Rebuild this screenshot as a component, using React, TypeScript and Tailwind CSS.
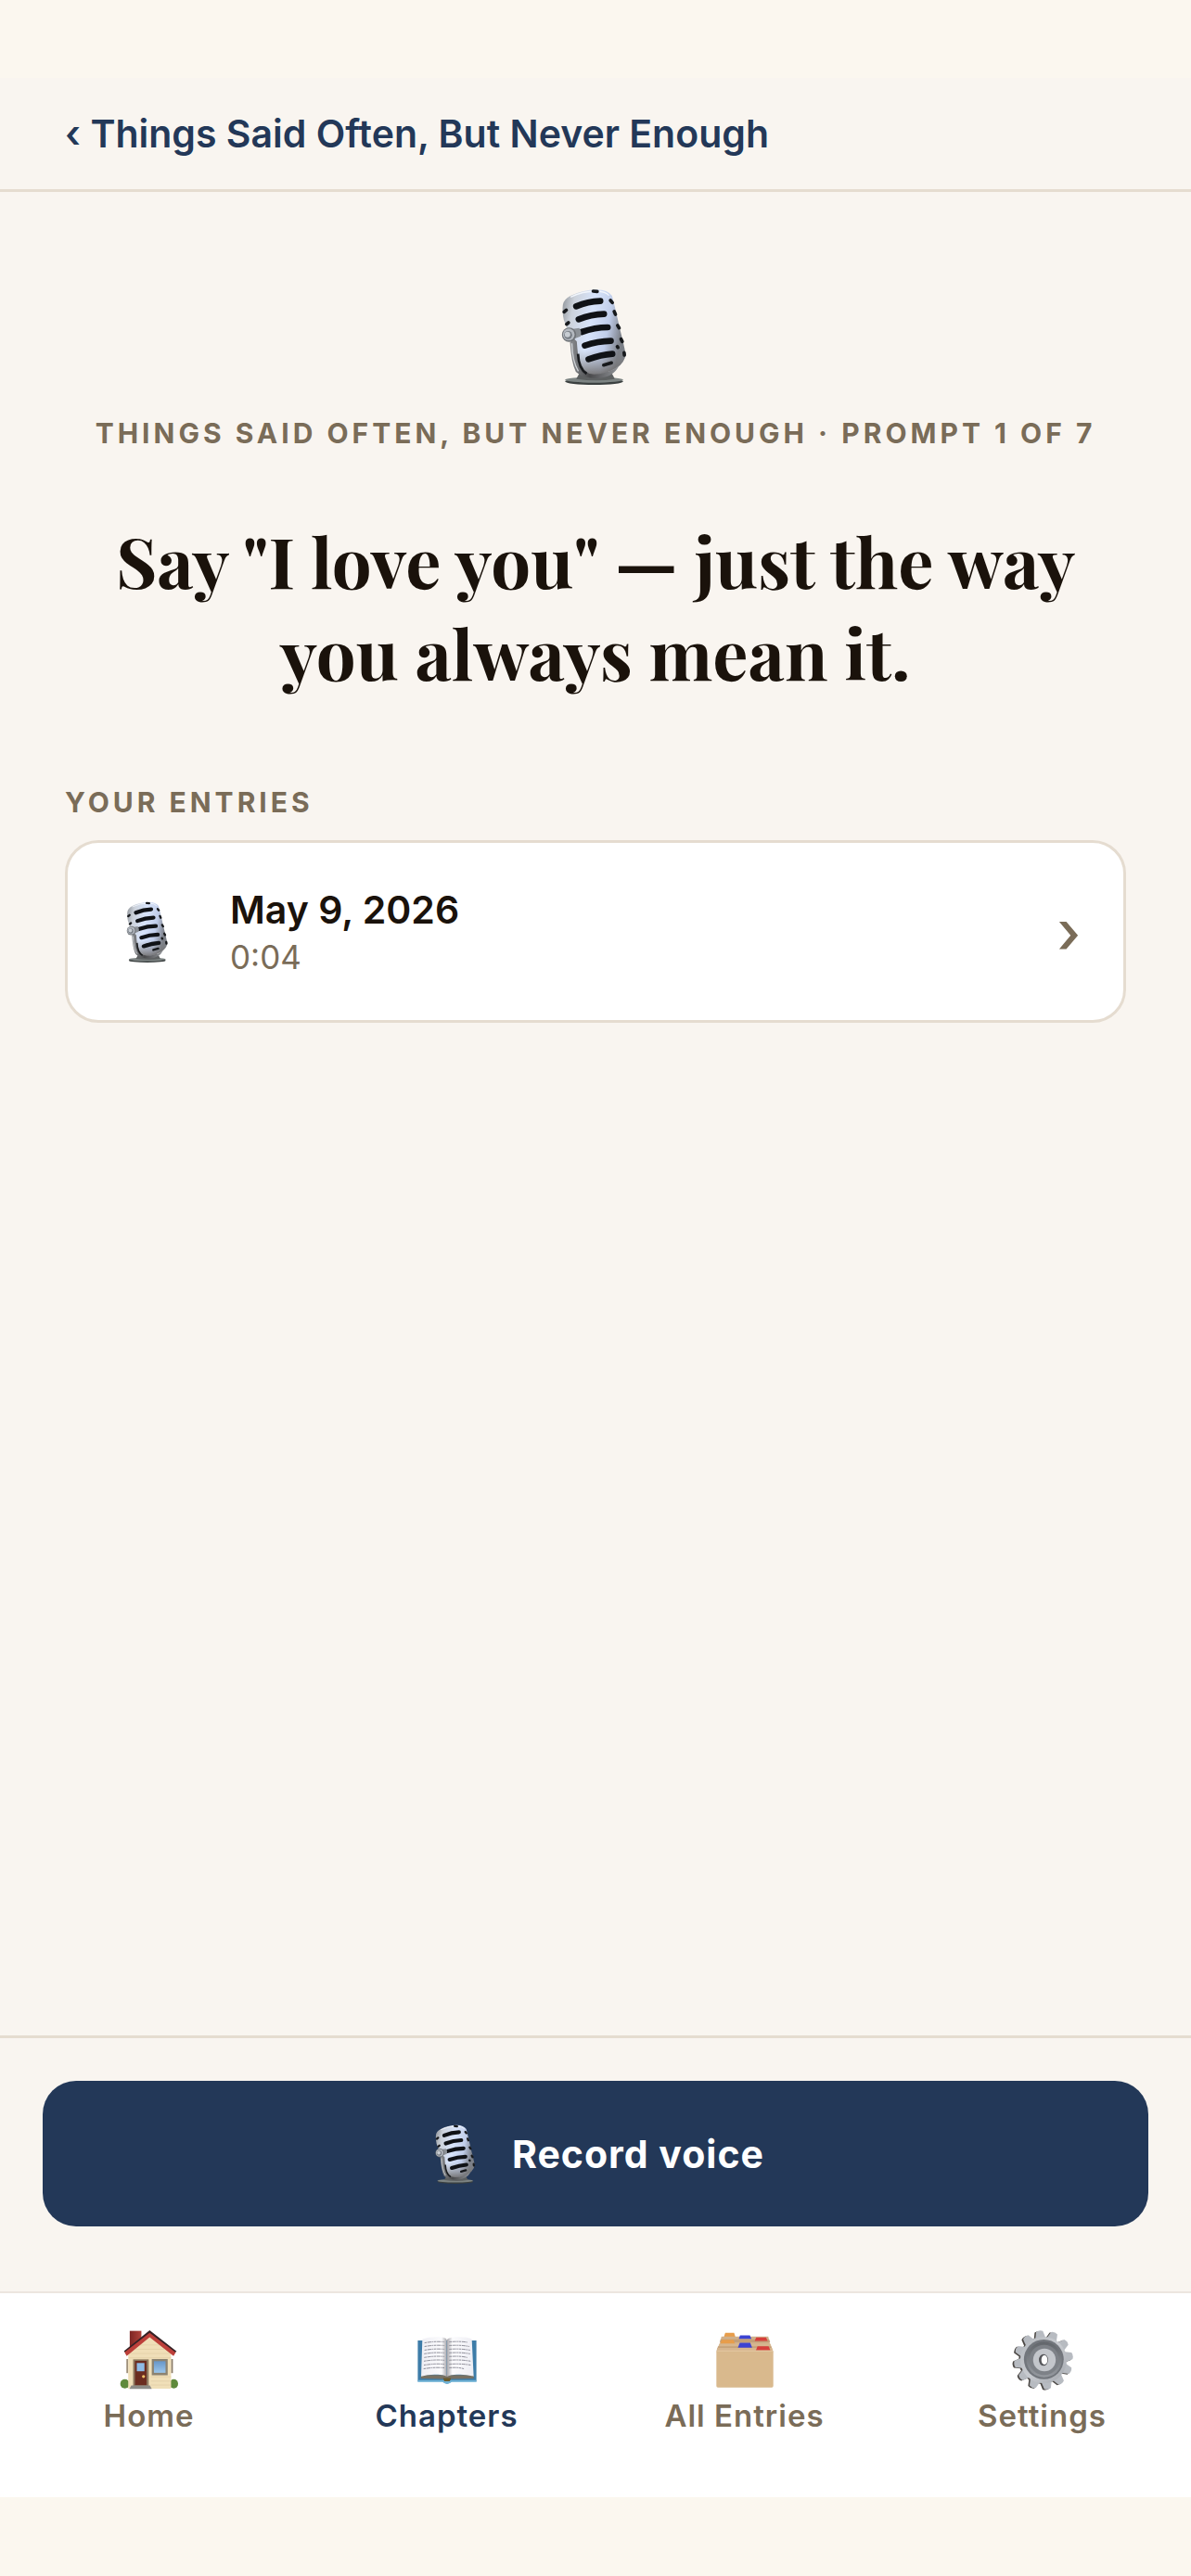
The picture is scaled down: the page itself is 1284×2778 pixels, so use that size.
import type { ReactNode } from 'react';

type IconProps = {
  className?: string;
};

type Entry = {
  id: number;
  date: string;
  duration: string;
};

type Tab = {
  label: string;
  href: string;
  icon: ReactNode;
  active?: boolean;
};

const CHAPTER = 'Things Said Often, But Never Enough';

const entries: Entry[] = [{ id: 1, date: 'May 9, 2026', duration: '0:04' }];

function MicIcon({ className }: IconProps) {
  return (
    <svg viewBox="50 30 212 312" overflow="visible" className={className} aria-hidden="true">
      <defs>
        <linearGradient id="micBody" x1="0" y1="0" x2="1" y2="0.25">
          <stop offset="0" stopColor="#8b8f94" />
          <stop offset="0.2" stopColor="#ccd2db" />
          <stop offset="0.5" stopColor="#d8e4fb" />
          <stop offset="0.78" stopColor="#c0cdea" />
          <stop offset="1" stopColor="#7c8088" />
        </linearGradient>
        <linearGradient id="micShade" x1="0" y1="0" x2="0" y2="1">
          <stop offset="0.7" stopColor="#888" stopOpacity="0" />
          <stop offset="1" stopColor="#66625e" stopOpacity="0.85" />
        </linearGradient>
        <linearGradient id="micArm" x1="0" y1="0" x2="1" y2="0">
          <stop offset="0" stopColor="#8b8e92" />
          <stop offset="0.4" stopColor="#4a4a4c" />
          <stop offset="1" stopColor="#919499" />
        </linearGradient>
      </defs>
      {/* stand */}
      <ellipse cx="150" cy="331" rx="94" ry="11" fill="#3b4040" />
      <ellipse cx="150" cy="326" rx="94" ry="9" fill="#7d8483" />
      <path d="M105 300 L205 300 L217 323 Q160 332 92 323Z" fill="#5d6061" />
      {/* capsule */}
      <path
        d="M49 83 Q52 66 72 55 Q110 35 160 34 Q194 35 208 54 Q220 100 233 160 Q247 215 252 242 Q250 270 221 288 Q185 310 132 312 Q98 302 92 270 Q73 180 52 132 Q46 104 49 83Z"
        fill="url(#micBody)"
      />
      <path
        d="M49 83 Q52 66 72 55 Q110 35 160 34 Q194 35 208 54 Q220 100 233 160 Q247 215 252 242 Q250 270 221 288 Q185 310 132 312 Q98 302 92 270 Q73 180 52 132 Q46 104 49 83Z"
        fill="url(#micShade)"
      />
      <path d="M74 58 Q115 38 160 39 Q187 40 198 53" fill="none" stroke="#f2f6fc" strokeWidth="4" />
      {/* grille slots */}
      <g fill="none" stroke="#101216" strokeWidth="20" strokeLinecap="round">
        <path d="M92 88 Q130 72 170 71" />
        <path d="M100 130 Q140 114 182 113" />
        <path d="M110 171 Q152 156 194 156" />
        <path d="M120 215 Q162 201 204 200" />
        <path d="M132 259 Q172 245 209 242" />
      </g>
      <g fill="none" stroke="#17191c" strokeWidth="11" strokeLinecap="round">
        <path d="M147 39 L160 40" />
        <path d="M53 106 L60 100" />
        <path d="M61 146 L67 141" />
        <path d="M203 69 L209 76" />
        <path d="M215 105 L219 114" />
        <path d="M226 150 L231 158" />
        <path d="M237 194 L241 202" />
        <path d="M225 218 L227 221" />
        <path d="M247 238 L248 246" />
        <path d="M181 278 L206 271" />
      </g>
      {/* yoke */}
      <path
        d="M84 192 L94 202 Q97 248 103 274 Q112 306 150 308 Q196 308 231 280 Q212 319 160 321 Q112 321 91 300 Q76 270 72 204Z"
        fill="url(#micArm)"
      />
      <path d="M98 242 Q100 290 126 306" fill="none" stroke="#191b1e" strokeWidth="8" />
      <path d="M78 208 Q80 268 99 298" fill="none" stroke="#d0d3d7" strokeWidth="4" />
      <path d="M75 162 L102 158 Q111 170 106 185 L78 196Z" fill="#8b9096" />
      <circle cx="69" cy="180" r="23" fill="#6f7378" />
      <circle cx="68" cy="179" r="19" fill="#b4b9c0" />
      <circle cx="66" cy="181" r="13" fill="#767c83" />
      <circle cx="64" cy="179" r="9" fill="#c8cdd3" />
    </svg>
  );
}

function HomeIcon({ className }: IconProps) {
  return (
    <svg viewBox="84 70 190 194" className={className} aria-hidden="true">
      <defs>
        <linearGradient id="homeChimney" x1="0" y1="0" x2="1" y2="0">
          <stop offset="0" stopColor="#7c2523" />
          <stop offset="1" stopColor="#b0423a" />
        </linearGradient>
        <linearGradient id="homeGlass" x1="0" y1="0" x2="0" y2="1">
          <stop offset="0" stopColor="#6796c8" />
          <stop offset="1" stopColor="#9cc6ea" />
        </linearGradient>
      </defs>
      <rect x="104" y="164" width="6" height="46" fill="#9d8f79" />
      <rect x="250" y="164" width="6" height="46" fill="#8a7c68" />
      <ellipse cx="99" cy="245" rx="15" ry="15" fill="#5f8a3c" />
      <ellipse cx="259" cy="245" rx="14" ry="15" fill="#5f8a3c" />
      <rect x="115" y="72" width="38" height="60" fill="url(#homeChimney)" />
      <path d="M110 145 L180 84 L250 145 L250 261 L110 261Z" fill="#f0dfb8" />
      <g stroke="#d9c69c" strokeWidth="1.5">
        <path d="M148 118H212M134 132H228M118 146H244M112 160H250M184 222H250M184 236H250M184 249H250" />
      </g>
      {/* roof */}
      <path d="M96 138 L180 70 L268 139 L260 146 L180 84 L104 147Z" fill="#352225" />
      <path d="M98 142 L180 78 L265 143 L258 154 L180 93 L105 154Z" fill="#bd403a" />
      {/* door */}
      <rect x="126" y="165" width="51" height="88" fill="#8e7a60" />
      <rect x="132" y="170" width="38" height="80" fill="#6b2d20" />
      <rect x="138" y="177" width="25" height="27" fill="#8fbbe6" />
      <circle cx="160" cy="221" r="5" fill="#f2c368" />
      {/* window */}
      <rect x="187" y="164" width="52" height="53" fill="#8c8370" />
      <rect x="194" y="171" width="38" height="38" fill="url(#homeGlass)" />
      <path d="M120 250H181L187 262H114Z" fill="#8d8b86" />
    </svg>
  );
}

function BookIcon({ className }: IconProps) {
  return (
    <svg viewBox="178 88 194 158" className={className} aria-hidden="true">
      <defs>
        <linearGradient id="bookLeft" x1="0" y1="0" x2="1" y2="0">
          <stop offset="0" stopColor="#eeeef4" />
          <stop offset="0.8" stopColor="#fbfbfd" />
          <stop offset="1" stopColor="#a9a8ad" />
        </linearGradient>
        <linearGradient id="bookRight" x1="0" y1="0" x2="1" y2="0">
          <stop offset="0" stopColor="#a9a8ad" />
          <stop offset="0.2" stopColor="#fbfbfd" />
          <stop offset="1" stopColor="#eeeef4" />
        </linearGradient>
      </defs>
      <path d="M179 103H371V238H290Q275 252 260 238H179Z" fill="#3d7ca8" />
      <path d="M179 233H371V239H290Q275 252 260 239H179Z" fill="#6fb2d6" />
      <path d="M190 216 L362 216 L362 228 L288 229 Q275 240 262 229 L189 228Z" fill="#777164" />
      <path d="M262 226H288L284 237H266Z" fill="#6b5b2c" />
      <path d="M194 99 Q218 91 245 92 Q268 91 274 100 V222 Q262 214 240 215 Q213 214 190 221Z" fill="url(#bookLeft)" />
      <path d="M275 100 Q284 91 310 92 Q340 91 356 99 L362 221 Q336 214 312 215 Q288 214 275 222Z" fill="url(#bookRight)" />
      <g fill="none" stroke="#777884" strokeWidth="2.5" strokeDasharray="8 2 12 2 5 2">
        <path d="M201 111 Q235 105 266 108M201 123 Q235 117 266 120M201 135 Q235 129 266 132M200 147 Q235 141 266 144M200 159 Q235 153 266 156M199 171 Q235 165 266 168M199 184 Q235 178 266 181M198 196 Q235 190 266 193" />
        <path d="M282 108 Q315 105 341 109M282 120 Q318 117 348 123M282 132 Q318 129 350 135M282 144 Q318 141 350 147M282 156 Q318 153 341 159M282 168 Q318 165 352 171M282 181 Q318 178 354 184M282 193 Q310 190 330 196" />
      </g>
    </svg>
  );
}

function DividersIcon({ className }: IconProps) {
  return (
    <svg viewBox="214 80 184 176" className={className} aria-hidden="true">
      <path d="M240 95 L244 82 H272 L276 95Z" fill="#e79d4b" />
      <path d="M232 94 H380 L390 138 H222Z" fill="#d0b08a" />
      <path d="M229 103 H383 L386 112 H227Z" fill="#c29f79" />
      <path d="M287 101 L291 90 H322 L327 101Z" fill="#3b43d2" />
      <path d="M337 108 L342 97 H373 L378 108Z" fill="#d63f3b" />
      <path d="M228 117 L233 104 H270 L275 117Z" fill="#e79d4b" />
      <path d="M225 117 H387 L391 130 H221Z" fill="#d6b68f" />
      <path d="M221 125 H389 L394 138 H217Z" fill="#c5a27a" />
      <path d="M284 129 L290 114 H323 L329 129Z" fill="#3b43d2" />
      <path d="M219 130 H392 L396 142 H216Z" fill="#d6b68f" />
      <path d="M341 138 L346 125 H381 L387 138Z" fill="#d63f3b" />
      <rect x="216" y="138" width="180" height="117" rx="5" fill="#d9b98d" />
      <rect x="219" y="138" width="175" height="3" fill="#e3c8a3" />
    </svg>
  );
}

const toothAngles = [0, 30, 60, 90, 120, 150, 180, 210, 240, 270, 300, 330];

function GearIcon({ className }: IconProps) {
  const teeth = toothAngles.map((angle) => (
    <path
      key={angle}
      d="M234 100 L241 72 Q252 66 263 72 L270 100Z"
      transform={`rotate(${angle - 8} 252 166)`}
    />
  ));

  return (
    <svg viewBox="150 66 198 200" className={className} aria-hidden="true">
      <defs>
        <linearGradient id="gearFace" x1="0" y1="0" x2="1" y2="1">
          <stop offset="0" stopColor="#b5b9be" />
          <stop offset="0.5" stopColor="#c8cbd0" />
          <stop offset="1" stopColor="#a2a6ac" />
        </linearGradient>
        <linearGradient id="gearRing" x1="0" y1="0" x2="0" y2="1">
          <stop offset="0" stopColor="#62666b" />
          <stop offset="1" stopColor="#95999f" />
        </linearGradient>
      </defs>
      <g fill="#4c4845" transform="translate(-5 2)">
        {teeth}
        <circle cx="252" cy="166" r="76" />
      </g>
      <g fill="#b7bbc1">{teeth}</g>
      <circle cx="252" cy="166" r="76" fill="url(#gearFace)" />
      <circle cx="253" cy="164" r="65" fill="#72767c" />
      <circle cx="254" cy="165" r="58" fill="url(#gearRing)" />
      <circle cx="254" cy="166" r="49" fill="#7d8187" />
      <circle cx="255" cy="166" r="37" fill="#c3c6cb" />
      <ellipse cx="252" cy="166" rx="15" ry="19" fill="#55565a" />
      <ellipse cx="255" cy="166" rx="10" ry="15" fill="#ffffff" />
    </svg>
  );
}

const tabs: Tab[] = [
  { label: 'Home', href: '#home', icon: <HomeIcon className="h-16 w-16" /> },
  { label: 'Chapters', href: '#chapters', icon: <BookIcon className="h-13 w-16" />, active: true },
  { label: 'All Entries', href: '#entries', icon: <DividersIcon className="h-15 w-16" /> },
  { label: 'Settings', href: '#settings', icon: <GearIcon className="h-[66px] w-[66px]" /> },
];

function EntryCard({ entry }: { entry: Entry }) {
  return (
    <button
      type="button"
      className="flex w-full items-center rounded-[36px] border-3 border-[#e5dcd0] bg-white py-[46px] pl-16 pr-[46px] text-left"
    >
      <MicIcon className="h-[66px] w-[46px] shrink-0" />
      <span className="ml-[65px] flex flex-1 flex-col gap-[3px]">
        <span className="text-[41px] leading-[52px] font-semibold text-[#1a120b]">{entry.date}</span>
        <span className="text-[35px] leading-[44px] text-[#7a6c58]">{entry.duration}</span>
      </span>
      <span className="text-[64px] leading-[80px] font-medium text-[#7a6c58]" aria-hidden="true">
        ›
      </span>
    </button>
  );
}

function TabBar() {
  return (
    <nav className="flex border-t-2 border-[#ece6df] bg-white pt-10 pb-[68px]">
      {tabs.map((tab) => (
        <a
          key={tab.label}
          href={tab.href}
          aria-current={tab.active ? 'page' : undefined}
          className={`flex flex-1 flex-col items-center gap-2 ${tab.active ? 'text-[#233858]' : 'text-[#7a6c58]'}`}
        >
          <span className="flex h-16 items-center">{tab.icon}</span>
          <span className="text-[33px] leading-10 font-semibold tracking-[1px]">{tab.label}</span>
        </a>
      ))}
    </nav>
  );
}

export default function App() {
  return (
    <div className="flex min-h-screen flex-col bg-[#fbf7ef] pt-[84px] pb-[85px] font-['Inter','Liberation_Sans',sans-serif]">
      <div className="flex flex-1 flex-col bg-[#f9f5f0]">
        <header className="border-b-3 border-[#e5dcd0] px-[70px] py-9">
          <a href="#chapter" className="block text-[41px] leading-[48px] font-semibold text-[#233858]">
            ‹ {CHAPTER}
          </a>
        </header>

        <main className="flex flex-1 flex-col px-[70px] pt-[104px]">
          <MicIcon className="h-[104px] w-[71px] self-center" />
          <p className="mt-[34px] text-center text-[30px] leading-9 font-bold tracking-[4px] text-[#7a6c58] uppercase">
            {CHAPTER} · Prompt 1 of 7
          </p>
          <h1 className="mt-[69px] text-center font-['Playfair_Display','Liberation_Serif',serif] text-[76px] leading-[99px] font-bold text-[#1a120b]">
            Say "I love you" — just the way you always mean it.
          </h1>

          <section className="mt-[95px]">
            <h2 className="text-[30px] leading-9 font-bold tracking-[4px] text-[#7a6c58] uppercase">
              Your entries
            </h2>
            <ul className="mt-[23px] flex flex-col gap-6">
              {entries.map((entry) => (
                <li key={entry.id}>
                  <EntryCard entry={entry} />
                </li>
              ))}
            </ul>
          </section>
        </main>

        {/* record action */}
        <div className="border-t-3 border-[#e5dcd0] px-[46px] pt-[46px] pb-[70px]">
          <button
            type="button"
            className="flex h-[157px] w-full items-center justify-center gap-7 rounded-[36px] bg-[#233858] text-white"
          >
            <MicIcon className="h-16 w-16" />
            <span className="text-[41px] leading-[52px] font-bold tracking-[1px]">Record voice</span>
          </button>
        </div>

        <TabBar />
      </div>
    </div>
  );
}
